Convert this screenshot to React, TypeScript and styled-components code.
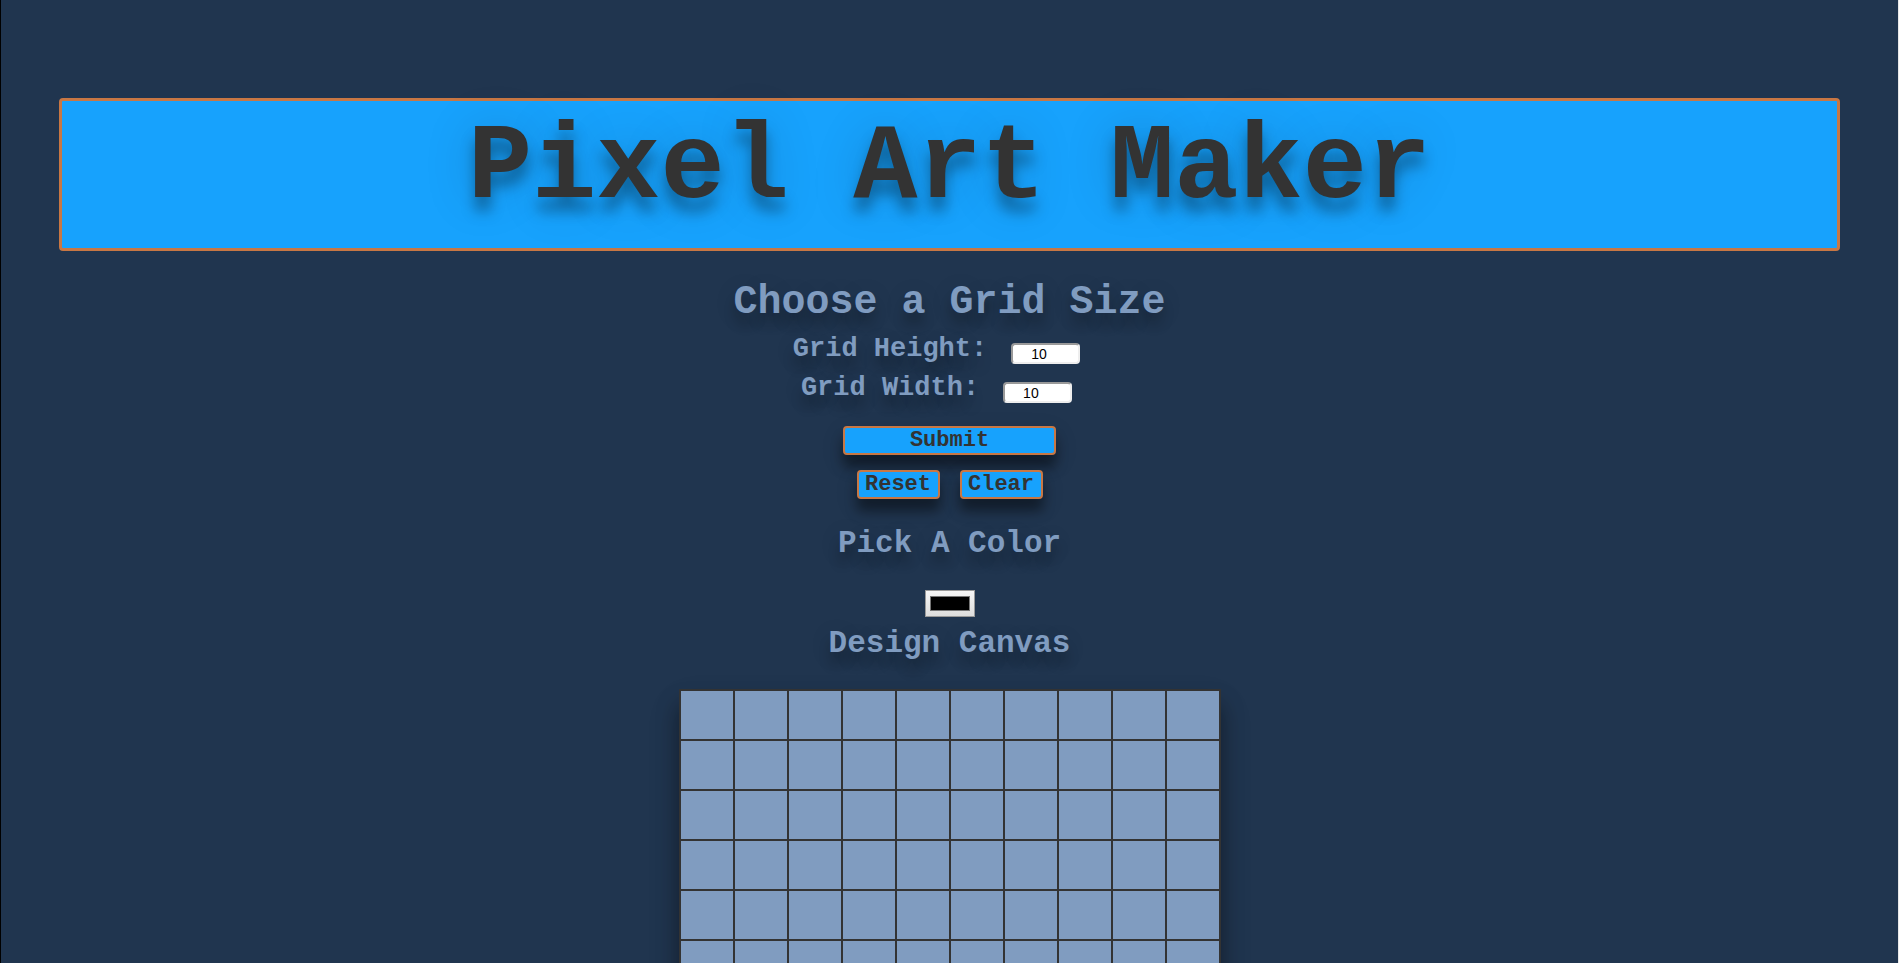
import React, { FormEvent, useState } from "react";
import styled, { createGlobalStyle } from "styled-components";

const colors = {
  page: "#20354f",
  primary: "#17a2fd",
  accent: "#c87744",
  ink: "#333333",
  soft: "#809cc0",
};

const pixelFont = `"Liberation Mono", "DejaVu Sans Mono", monospace`;
const softShadow = "0 12px 12px rgba(0, 0, 0, 0.24), 0 4px 24px rgba(0, 0, 0, 0.12)";
const titleShadow = "0 14px 14px rgba(0, 0, 0, 0.34), 0 4px 50px rgba(0, 0, 0, 0.19)";

const GlobalStyle = createGlobalStyle`
  *, *::before, *::after { box-sizing: border-box; }
  body {
    margin: 0;
    background: ${colors.page};
    color: ${colors.soft};
    font-family: ${pixelFont};
  }
`;

const Page = styled.div`
  display: flex;
  flex-direction: column;
  align-items: center;
  min-height: 100vh;
  padding: 98px 58px 60px;
  border-left: 1px solid #000000;
  border-right: 1px solid #e8e8e8;
`;

const Banner = styled.header`
  width: 100%;
  margin-bottom: 28px;
  padding: 8px 16px 19px;
  border: 3px solid ${colors.accent};
  border-radius: 4px;
  background: ${colors.primary};
  text-align: center;
`;

const Title = styled.h1`
  margin: 0;
  color: ${colors.ink};
  font-size: 107px;
  line-height: 120px;
  text-shadow: ${titleShadow};
`;

const SectionTitle = styled.h2<{ $small?: boolean }>`
  margin: 0;
  font-size: ${(p) => (p.$small ? 31 : 40)}px;
  line-height: ${(p) => (p.$small ? 40 : 48)}px;
  text-align: center;
  text-shadow: ${softShadow};
`;

const SizeForm = styled.form`
  display: flex;
  flex-direction: column;
  align-items: center;
  margin-top: 7px;
`;

const Field = styled.div`
  display: flex;
  align-items: center;
  gap: 24px;
  height: 39px;
  padding-right: 26px;
`;

const FieldLabel = styled.label`
  padding-bottom: 8px;
  font-size: 27px;
  font-weight: bold;
  line-height: 31px;
  text-shadow: ${softShadow};
`;

const NumberInput = styled.input`
  width: 69px;
  height: 21px;
  padding: 0 0 0 18px;
  border: 2px solid;
  border-color: #999999 #eeeeee #eeeeee #999999;
  border-radius: 4px;
  background: #ffffff;
  color: #000000;
  font: 14px/17px "Liberation Sans", Arial, sans-serif;
  appearance: textfield;
  &::-webkit-inner-spin-button { display: none; }
`;

const Button = styled.button<{ $wide?: boolean }>`
  width: ${(p) => (p.$wide ? 213 : 83)}px;
  height: 29px;
  padding: 0;
  border: 2px solid ${colors.accent};
  border-radius: 4px;
  background: ${colors.primary};
  color: ${colors.ink};
  font: bold 22px/22px ${pixelFont};
  box-shadow: 0 12px 12px rgba(0, 0, 0, 0.4), 0 8px 24px rgba(0, 0, 0, 0.12);
  cursor: pointer;
`;

const Actions = styled.div`
  display: flex;
  flex-wrap: wrap;
  justify-content: center;
  gap: 15px 20px;
  width: 213px;
  margin: 14px 0 25px;
`;

const ColorInput = styled.input`
  width: 50px;
  height: 27px;
  margin: 26px 0 7px;
  padding: 5px 4px;
  border: 1px solid #999999;
  background: linear-gradient(#f6f6f6, #dddddd);
  appearance: none;
  &::-webkit-color-swatch-wrapper { padding: 0; }
  &::-webkit-color-swatch {
    border: 1px solid #777777;
    border-radius: 0;
  }
`;

const Canvas = styled.table`
  margin-top: 25px;
  border-collapse: collapse;
  background: ${colors.soft};
  box-shadow: 0 16px 20px rgba(0, 0, 0, 0.36), 0 16px 32px rgba(0, 0, 0, 0.12);
`;

const Cell = styled.td`
  width: 54px;
  height: 50px;
  padding: 0;
  border: 2px solid ${colors.ink};
`;

export default function App() {
  const [height, setHeight] = useState("10");
  const [width, setWidth] = useState("10");
  const [size, setSize] = useState({ rows: 10, columns: 10 });
  const [color, setColor] = useState("#000000");
  const [painted, setPainted] = useState<Record<string, string>>({});

  const build = (event: FormEvent) => {
    event.preventDefault();
    setSize({ rows: Number(height), columns: Number(width) });
    setPainted({});
  };

  const reset = () => {
    setHeight("10");
    setWidth("10");
    setSize({ rows: 10, columns: 10 });
    setPainted({});
  };

  return (
    <>
      <GlobalStyle />
      <Page>
        <Banner>
          <Title>Pixel Art Maker</Title>
        </Banner>
        <SectionTitle>Choose a Grid Size</SectionTitle>
        <SizeForm onSubmit={build}>
          <Field>
            <FieldLabel htmlFor="gridHeight">Grid Height:</FieldLabel>
            <NumberInput id="gridHeight" type="number" min="1" value={height} onChange={(e) => setHeight(e.target.value)} />
          </Field>
          <Field>
            <FieldLabel htmlFor="gridWidth">Grid Width:</FieldLabel>
            <NumberInput id="gridWidth" type="number" min="1" value={width} onChange={(e) => setWidth(e.target.value)} />
          </Field>
          <Actions>
            <Button $wide type="submit">Submit</Button>
            <Button type="button" onClick={reset}>Reset</Button>
            <Button type="button" onClick={() => setPainted({})}>Clear</Button>
          </Actions>
        </SizeForm>
        <SectionTitle $small>
          <label htmlFor="colorPicker">Pick A Color</label>
        </SectionTitle>
        <ColorInput id="colorPicker" type="color" value={color} onChange={(e) => setColor(e.target.value)} />
        <SectionTitle $small>Design Canvas</SectionTitle>
        <Canvas aria-label="Design Canvas">
          <tbody>
            {Array.from({ length: size.rows }, (_, row) => (
              <tr key={row}>
                {Array.from({ length: size.columns }, (_, column) => {
                  const key = `${row}-${column}`;
                  return (
                    <Cell
                      key={key}
                      style={{ backgroundColor: painted[key] }}
                      onClick={() => setPainted((cells) => ({ ...cells, [key]: color }))}
                    />
                  );
                })}
              </tr>
            ))}
          </tbody>
        </Canvas>
      </Page>
    </>
  );
}
